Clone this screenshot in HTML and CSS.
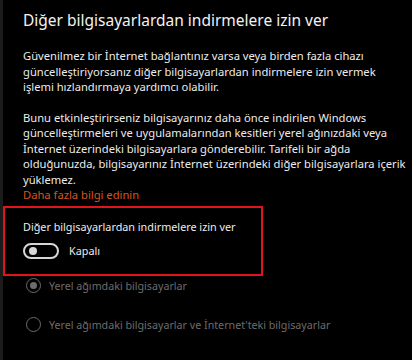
FILE: index.html
```html
<!DOCTYPE html>
<html lang="tr">

<head>
    <meta charset="UTF-8">
    <meta name="viewport" content="width=device-width, initial-scale=1.0">
    <title>Teslim İyileştirme</title>
    <link rel="stylesheet" href="styles.css">
</head>

<body>
    <div class="page">
        <h1 class="title">Diğer bilgisayarlardan indirmelere izin ver</h1>

        <p class="text first">Güvenilmez bir İnternet bağlantınız varsa veya birden fazla cihazı<br>
            güncelleştiriyorsanız diğer bilgisayarlardan indirmelere izin vermek<br>
            işlemi hızlandırmaya yardımcı olabilir.</p>

        <p class="text second">Bunu etkinleştirirseniz bilgisayarınız daha önce indirilen Windows<br>
            güncelleştirmeleri ve uygulamalarından kesitleri yerel ağınızdaki veya<br>
            İnternet üzerindeki bilgisayarlara gönderebilir. Tarifeli bir ağda<br>
            olduğunuzda, bilgisayarınız İnternet üzerindeki diğer bilgisayarlara içerik<br>
            yüklemez.<br><a class="link" href="javascript:;">Daha fazla bilgi edinin</a></p>

        <div class="box">
            <div class="label">Diğer bilgisayarlardan indirmelere izin ver</div>
            <div class="switch-row">
                <span class="switch"><span class="knob"></span></span>
                <span class="state">Kapalı</span>
            </div>
        </div>

        <div class="radios">
            <div class="radio-row">
                <span class="radio checked"></span>
                <span>Yerel ağımdaki bilgisayarlar</span>
            </div>
            <div class="radio-row">
                <span class="radio"></span>
                <span>Yerel ağımdaki bilgisayarlar ve İnternet'teki bilgisayarlar</span>
            </div>
        </div>
    </div>
</body>

</html>
```

FILE: styles.css
```css
body,
p,
h1 {
    margin: 0;
}

body {
    background-color: #000;
    color: #ececec;
    font-family: "Noto Sans", "Open Sans", sans-serif;
}

.page {
    min-height: 360px;
    border-left: 3px solid #1b1b1b;
    box-sizing: border-box;
}

.title {
    padding: 6px 0 0 20px;
    font-size: 15.5px;
    font-weight: normal;
    line-height: 28px;
    color: #f2f2f2;
    white-space: nowrap;
}

.text {
    padding-left: 20px;
    font-size: 11.2px;
    line-height: 15.5px;
    white-space: nowrap;
}

.first {
    margin-top: 14px;
}

.second {
    margin-top: 15px;
}

.link {
    color: #d9541e;
    text-decoration: none;
}

.box {
    width: 260px;
    margin-top: 3px;
    padding: 11px 0 15px 18px;
    border: 2px solid #e0141b;
    box-sizing: border-box;
    font-size: 10.8px;
    line-height: 16px;
}

.switch-row {
    display: flex;
    align-items: center;
    gap: 10px;
    margin-top: 8px;
}

.switch {
    display: flex;
    align-items: center;
    width: 36px;
    height: 16px;
    padding-left: 4px;
    border: 2px solid #d6d6d6;
    border-radius: 10px;
    box-sizing: border-box;
}

.knob {
    width: 8px;
    height: 8px;
    border-radius: 50%;
    background-color: #d6d6d6;
}

.radios {
    padding-left: 23px;
    margin-top: 3px;
    font-size: 10.7px;
    color: #6c6c6c;
}

.radio-row {
    display: flex;
    align-items: center;
    gap: 8px;
    height: 14px;
    margin-bottom: 25px;
}

.radio {
    display: flex;
    align-items: center;
    justify-content: center;
    width: 15px;
    height: 15px;
    border: 1.5px solid #6c6c6c;
    border-radius: 50%;
    box-sizing: border-box;
}

.radio.checked::after {
    content: "";
    width: 7px;
    height: 7px;
    border-radius: 50%;
    background-color: #6c6c6c;
}
```
